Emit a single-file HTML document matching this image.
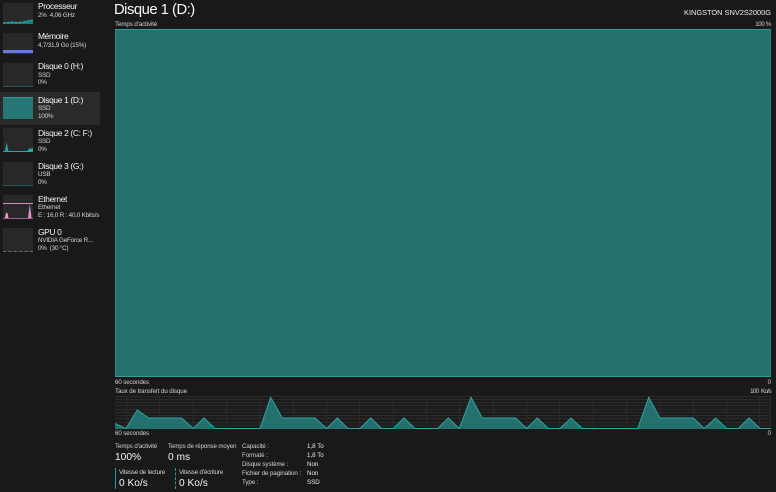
<!DOCTYPE html>
<html lang="fr"><head><meta charset="utf-8"><style>
html,body{margin:0;padding:0;background:#191919;}
#p{position:relative;width:776px;height:492px;overflow:hidden;background:#191919;color:#f0f0f0;font-family:"Liberation Sans",sans-serif;}
.t{position:absolute;white-space:nowrap;line-height:1;}
.b{position:absolute;left:3px;width:30px;background:#282828;border-bottom:1px solid #303030;box-sizing:border-box;}
.n{font-size:8.4px;color:#f6f6f6;left:38px;letter-spacing:-.33px;}
.s{font-size:6.3px;color:#d6d6d6;left:38px;letter-spacing:-.2px;}
.l{font-size:6.2px;color:#d2d2d2;letter-spacing:-.1px;}
.r{letter-spacing:-.35px;}
.k{font-size:6.2px;color:#d2d2d2;left:242px;letter-spacing:-.08px;}
.v{font-size:6.2px;color:#ececec;left:307px;}
.g{font-size:10.2px;color:#f4f4f4;}
svg{position:absolute;display:block;}
</style></head><body><div id="p">

<div style="position:absolute;left:0;top:92px;width:100px;height:33px;background:#2a2a2a"></div>

<div class="b" style="top:3px;height:21px"></div>
<svg style="left:3px;top:3px" width="30" height="21"><polygon points="0,20 9,19 14,19.5 20,19 26,17.5 30,17 30,21 0,21" fill="#1d7f80"/><polyline points="0,20 9,19 14,19.5 20,19 26,17.5 30,17" fill="none" stroke="#2ab6b8" stroke-width="1" stroke-dasharray="3 1"/></svg>
<div class="t n" style="top:2px">Processeur</div>
<div class="t s" style="top:13px">2%&nbsp; 4,06 GHz</div>

<div class="b" style="top:33px;height:21px"></div>
<div style="position:absolute;left:3px;top:50px;width:30px;height:3px;background:#6a78d8"></div>
<div class="t n" style="top:32px">Mémoire</div>
<div class="t s" style="top:43px">4,7/31,9 Go (15%)</div>

<div class="b" style="top:63px;height:24px;border-bottom:1px solid #225a5a"></div>
<div class="t n" style="top:62px">Disque 0 (H:)</div>
<div class="t s" style="top:73px">SSD</div>
<div class="t s" style="top:80px">0%</div>

<div style="position:absolute;left:3px;top:97px;width:30px;height:22px;background:#267675;border-top:1px solid #2e9c9c;box-sizing:border-box"></div>
<div class="t n" style="top:96px">Disque 1 (D:)</div>
<div class="t s" style="top:106px">SSD</div>
<div class="t s" style="top:114px">100%</div>

<div class="b" style="top:128px;height:24px"></div>
<svg style="left:3px;top:128px" width="30" height="24"><polygon points="0,23 2,23 3.7,14 5.4,23 24,23 27,20 29,21 30,19 30,24 0,24" fill="#22a8a8"/></svg>
<div class="t n" style="top:129px">Disque 2 (C: F:)</div>
<div class="t s" style="top:139px">SSD</div>
<div class="t s" style="top:147px">0%</div>

<div class="b" style="top:162px;height:24px;border-bottom:1px solid #225a5a"></div>
<div class="t n" style="top:162px">Disque 3 (G:)</div>
<div class="t s" style="top:172px">USB</div>
<div class="t s" style="top:180px">0%</div>

<div class="b" style="top:195px;height:24px"></div>
<svg style="left:3px;top:195px" width="30" height="24"><line x1="0" y1="8.5" x2="30" y2="8.5" stroke="#d98ac0" stroke-width="1"/><polygon points="2,23 3,18 4.5,18 5.5,23" fill="#f0a0d8"/><polygon points="25,23 26.8,9 28.6,23" fill="#e090c8"/><line x1="0" y1="23.5" x2="30" y2="23.5" stroke="#9a6090"/></svg>
<div class="t n" style="top:195px">Ethernet</div>
<div class="t s" style="top:205px">Ethernet</div>
<div class="t s" style="top:213px">E : 16,0 R : 40,0 Kbits/s</div>

<div class="b" style="top:228px;height:24px;border-bottom:1px dashed #6a6a78"></div>
<div class="t n" style="top:228px">GPU 0</div>
<div class="t s" style="top:238px">NVIDIA GeForce R...</div>
<div class="t s" style="top:246px">0%&nbsp; (30 °C)</div>

<div class="t" style="left:114px;top:3px;font-size:14.8px;letter-spacing:-.5px;color:#f8f8f8">Disque 1 (D:)</div>
<div class="t" style="right:5px;top:9px;font-size:7.4px;color:#eeeeee">KINGSTON SNV2S2000G</div>
<div class="t l" style="left:115px;top:22px">Temps d'activité</div>
<div class="t l r" style="right:5px;top:22px">100 %</div>

<div style="position:absolute;left:115px;top:29px;width:656px;height:348px;background:#23706f;border-top:1px solid #2f9c9b;border-bottom:1px solid #2f9c9b;border-left:1px solid #2a8a89;border-right:1px solid #2a8a89;box-sizing:border-box"></div>

<div class="t l" style="left:115px;top:380px">60 secondes</div>
<div class="t l" style="right:5px;top:380px">0</div>
<div class="t l" style="left:115px;top:389px">Taux de transfert du disque</div>
<div class="t l r" style="right:5px;top:389px;letter-spacing:-.6px;word-spacing:1.2px">100 Ko/s</div>

<svg style="left:115px;top:396px" width="656" height="34" viewBox="115 396 656 34">
<rect x="115" y="396" width="656" height="33" fill="#1c1c1c"/>
<g stroke="#2a2a2a" stroke-width="1" shape-rendering="crispEdges">
<line x1="115" x2="771" y1="396.5" y2="396.5"/><line x1="115" x2="771" y1="399.5" y2="399.5"/><line x1="115" x2="771" y1="402.5" y2="402.5"/><line x1="115" x2="771" y1="405.5" y2="405.5"/><line x1="115" x2="771" y1="409.5" y2="409.5"/><line x1="115" x2="771" y1="412.5" y2="412.5"/><line x1="115" x2="771" y1="415.5" y2="415.5"/><line x1="115" x2="771" y1="418.5" y2="418.5"/><line x1="115" x2="771" y1="422.5" y2="422.5"/><line x1="115" x2="771" y1="425.5" y2="425.5"/>
<line y1="396" y2="429" x1="126.5" x2="126.5"/><line y1="396" y2="429" x1="159.5" x2="159.5"/><line y1="396" y2="429" x1="193.5" x2="193.5"/><line y1="396" y2="429" x1="226.5" x2="226.5"/><line y1="396" y2="429" x1="259.5" x2="259.5"/><line y1="396" y2="429" x1="293.5" x2="293.5"/><line y1="396" y2="429" x1="326.5" x2="326.5"/><line y1="396" y2="429" x1="359.5" x2="359.5"/><line y1="396" y2="429" x1="393.5" x2="393.5"/><line y1="396" y2="429" x1="426.5" x2="426.5"/><line y1="396" y2="429" x1="459.5" x2="459.5"/><line y1="396" y2="429" x1="493.5" x2="493.5"/><line y1="396" y2="429" x1="526.5" x2="526.5"/><line y1="396" y2="429" x1="559.5" x2="559.5"/><line y1="396" y2="429" x1="593.5" x2="593.5"/><line y1="396" y2="429" x1="626.5" x2="626.5"/><line y1="396" y2="429" x1="659.5" x2="659.5"/><line y1="396" y2="429" x1="693.5" x2="693.5"/><line y1="396" y2="429" x1="726.5" x2="726.5"/><line y1="396" y2="429" x1="759.5" x2="759.5"/><line y1="396" y2="429" x1="770.5" x2="770.5"/>
</g>
<polygon fill="#23706f" points="115,429 115,423.5 126,428.5 137.3,410 148.7,418 181.7,418 193.3,428.5 204,418 215,428.5 260,428.5 270.7,397.3 282.3,418 315,418 326.7,428.5 337.3,418 348,428.5 360,428.5 370.7,418 381.7,428.5 393.3,428.5 404,418 415,428.5 437.7,428.5 448.3,418 459.3,428.5 471,397.3 482.3,418 515.7,418 526.7,428.5 537.3,418 548.3,428.5 560,428.5 571,418 582.3,428.5 637.7,428.5 648.7,397.3 660,418 693.3,418 704.3,428.5 715.7,418 726.7,428.5 738.3,428.5 749,418 760,428.5 771,428.5 771,429"/>
<polyline fill="none" stroke="#2fa3a2" stroke-width="1" points="115,423.5 126,428.5 137.3,410 148.7,418 181.7,418 193.3,428.5 204,418 215,428.5 260,428.5 270.7,397.3 282.3,418 315,418 326.7,428.5 337.3,418 348,428.5 360,428.5 370.7,418 381.7,428.5 393.3,428.5 404,418 415,428.5 437.7,428.5 448.3,418 459.3,428.5 471,397.3 482.3,418 515.7,418 526.7,428.5 537.3,418 548.3,428.5 560,428.5 571,418 582.3,428.5 637.7,428.5 648.7,397.3 660,418 693.3,418 704.3,428.5 715.7,418 726.7,428.5 738.3,428.5 749,418 760,428.5 771,428.5"/>
</svg>

<div class="t l" style="left:115px;top:431px">60 secondes</div>
<div class="t l" style="right:5px;top:431px">0</div>

<div class="t l" style="left:115px;top:444px">Temps d'activité</div>
<div class="t g" style="left:115px;top:453px">100%</div>
<div class="t l" style="left:168px;top:444px;letter-spacing:-.13px">Temps de réponse moyen</div>
<div class="t g" style="left:168px;top:453px">0 ms</div>

<div style="position:absolute;left:115px;top:468px;width:1px;height:21px;background:#2a9a99"></div>
<div class="t l" style="left:119px;top:470px;letter-spacing:-.17px">Vitesse de lecture</div>
<div class="t g" style="left:119px;top:479px">0 Ko/s</div>
<div style="position:absolute;left:175px;top:468px;width:0;height:21px;border-left:1px dashed #2a9a99"></div>
<div class="t l" style="left:179px;top:470px;letter-spacing:-.17px">Vitesse d'écriture</div>
<div class="t g" style="left:179px;top:479px">0 Ko/s</div>

<div class="t k" style="top:444px">Capacité :</div><div class="t v" style="top:444px">1,8 To</div>
<div class="t k" style="top:453px">Formaté :</div><div class="t v" style="top:453px">1,8 To</div>
<div class="t k" style="top:462px">Disque système :</div><div class="t v" style="top:462px">Non</div>
<div class="t k" style="top:471px">Fichier de pagination :</div><div class="t v" style="top:471px">Non</div>
<div class="t k" style="top:480px">Type :</div><div class="t v" style="top:480px">SSD</div>

</div></body></html>
